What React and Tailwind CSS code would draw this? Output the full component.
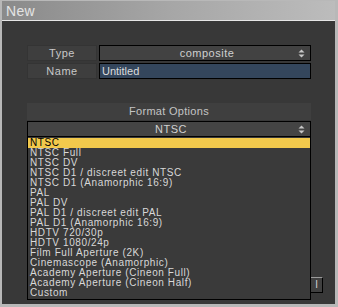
const FORMATS = [
  'NTSC',
  'NTSC Full',
  'NTSC DV',
  'NTSC D1 / discreet edit NTSC',
  'NTSC D1 (Anamorphic 16:9)',
  'PAL',
  'PAL DV',
  'PAL D1 / discreet edit PAL',
  'PAL D1 (Anamorphic 16:9)',
  'HDTV 720/30p',
  'HDTV 1080/24p',
  'Film Full Aperture (2K)',
  'Cinemascope (Anamorphic)',
  'Academy Aperture (Cineon Full)',
  'Academy Aperture (Cineon Half)',
  'Custom',
];

function Arrows() {
  return (
    <svg width="7" height="9" viewBox="0 0 7 9" className="shrink-0">
      <path d="M3.5 0.5 L6.5 3.5 H0.5 Z" fill="#c8c8c8" />
      <path d="M3.5 8.5 L6.5 5.5 H0.5 Z" fill="#c8c8c8" />
    </svg>
  );
}

export default function App() {
  return (
    <div className="w-[338px] h-[307px] bg-[#b8b8b8] pl-[2px] pr-[3px] pt-px pb-[3px] flex flex-col font-['Liberation_Sans',Arial,sans-serif] text-[11px] leading-none">
      {/* Title bar */}
      <div className="h-[20px] shrink-0 bg-gradient-to-r from-[#8a8a8a] via-[#a6a6a6] to-[#bcbcbc] border-b border-[#e6e6e6] flex items-center pl-[4px]">
        <span className="text-[#e4e4e4] text-[14px] tracking-wide">New</span>
      </div>

      {/* Body */}
      <div className="relative flex-1 bg-[#383838] pl-[25px] pt-[24px]">
        <div className="w-[284px] flex flex-col gap-[2px]">
          <div className="flex gap-[2px] h-[16px]">
            <div className="w-[70px] bg-[#3e3e3e] border border-[#343434] text-[#c8c8c8] flex items-center justify-center tracking-[0.5px]">Type</div>
            <div className="flex-1 bg-[#424242] border border-black text-[#d0d0d0] flex items-center pl-[16px] pr-[5px]">
              <span className="flex-1 text-center tracking-[0.5px]">composite</span>
              <Arrows />
            </div>
          </div>
          <div className="flex gap-[2px] h-[16px]">
            <div className="w-[70px] bg-[#3e3e3e] border border-[#343434] text-[#c8c8c8] flex items-center justify-center tracking-[0.5px]">Name</div>
            <div className="flex-1 bg-[#34465c] border border-black text-[#dcdcdc] flex items-center pl-[2px]">Untitled</div>
          </div>
        </div>

        <div className="w-[284px] mt-[24px] flex flex-col">
          <div className="h-[17px] bg-[#3f3f3f] text-[#c4c4c4] flex items-center justify-center tracking-[0.3px]">Format Options</div>
          <div className="h-[16px] mt-px bg-[#444444] border border-black text-[#d0d0d0] flex items-center pl-[16px] pr-[5px]">
            <span className="flex-1 text-center tracking-[0.5px]">NTSC</span>
            <Arrows />
          </div>
          <div className="relative">
            {/* button behind the open list */}
            <div className="absolute left-[283px] top-[140px] w-[13px] h-[16px] border border-[#9a9a9a] border-r-black border-b-black bg-[#404040] flex items-center justify-center text-[#d8d8d8] text-[10px]">l</div>
            <div className="relative h-[163px] bg-[#3a3a3a] border border-black border-t-0 pt-px flex flex-col">
              {FORMATS.map((f, i) => (
                <div key={f}
                  className={i === 0
                    ? 'h-[10px] bg-[#f2c94c] text-black flex items-center pl-[2px] text-[10px] leading-[10px] tracking-[0.6px]'
                    : 'h-[10px] text-[#d8d8d8] flex items-center pl-[2px] text-[10px] leading-[10px] tracking-[0.6px]'}>
                  {f}
                </div>
              ))}
            </div>
          </div>
        </div>
      </div>
    </div>
  );
}
